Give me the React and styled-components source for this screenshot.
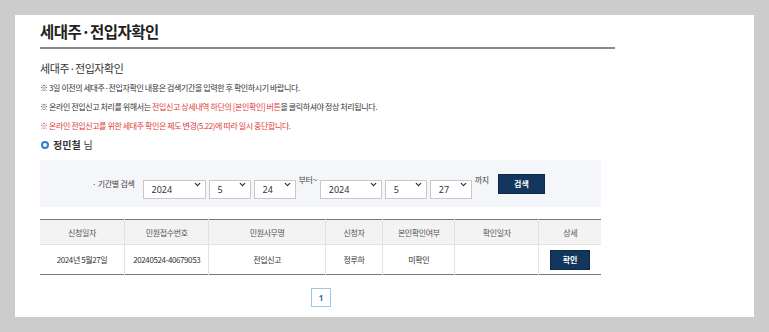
import styled, { createGlobalStyle } from 'styled-components';
import { ChevronDown } from 'lucide-react';

const GlobalStyle = createGlobalStyle`
  html, body {
    margin: 0;
    padding: 0;
    background: #cccccc;
  }
  body {
    font-family: "Noto Sans CJK KR", "Noto Sans", sans-serif;
    color: #333;
  }
`;

const Page = styled.div`
  padding: 15px;
  height: 332px;
  box-sizing: border-box;
`;

const Panel = styled.div`
  background: #fff;
  width: 739px;
  height: 302px;
  box-sizing: border-box;
  padding: 0 0 0 25px;
  overflow: hidden;
`;

const Title = styled.h1`
  margin: 0;
  width: 575px;
  padding-top: 4px;
  height: 28px;
  font-size: 15.5px;
  font-weight: 700;
  color: #222;
  letter-spacing: -0.5px;
  line-height: 24px;
  border-bottom: 2px solid #8a8a8a;
`;

const Content = styled.div`
  width: 561px;
`;

const SubTitle = styled.h2`
  margin: 12px 0 0;
  font-size: 11px;
  font-weight: 400;
  color: #333;
  line-height: 14px;
  height: 14px;
  letter-spacing: -0.4px;
`;

const Notes = styled.ul`
  list-style: none;
  margin: 3px 0 0;
  padding: 0;
`;

const Note = styled.li`
  font-size: 8px;
  height: 19px;
  line-height: 19px;
  letter-spacing: -0.4px;
  white-space: nowrap;
  color: ${p => (p.$red ? '#e03a3a' : '#333')};
`;

const Red = styled.span`
  color: #e03a3a;
`;

const User = styled.div`
  display: flex;
  align-items: center;
  margin-top: 3px;
  height: 14px;
  font-size: 10px;
  line-height: 14px;
  color: #333;
`;

const Ring = styled.span`
  width: 4px;
  height: 4px;
  border: 2px solid #2a7fd4;
  border-radius: 50%;
  margin: 0 4px 0 1px;
`;

const Name = styled.b`
  font-weight: 700;
  margin-right: 3px;
`;

const SearchBox = styled.div`
  margin-top: 8px;
  height: 47px;
  background: #f5f6f9;
  display: flex;
  align-items: center;
  justify-content: center;
  padding-right: 4px;
  gap: 3px;
`;

const SearchLabel = styled.span`
  font-size: 8px;
  color: #444;
  margin-right: 5px;
  letter-spacing: -0.3px;
`;

const Word = styled.span`
  font-size: 8px;
  color: #444;
  align-self: flex-start;
  margin-top: 14px;
  letter-spacing: -0.3px;
`;

const SelectWrap = styled.span`
  position: relative;
  display: inline-block;
  width: ${p => p.$w}px;
  height: 19px;
`;

const Select = styled.select`
  appearance: none;
  width: 100%;
  height: 100%;
  box-sizing: border-box;
  border: 1px solid #c8c8c8;
  background: #fff;
  font-family: "Noto Sans", sans-serif;
  font-size: 9px;
  color: #333;
  padding: 0 0 0 8px;
  border-radius: 0;
  outline: none;
`;

const Arrow = styled(ChevronDown)`
  position: absolute;
  right: 4px;
  top: 6px;
  pointer-events: none;
  color: #333;
`;

const Button = styled.button`
  background: #12365c;
  color: #fff;
  border: 1px solid #0d2a4a;
  font-family: "Noto Sans CJK KR", sans-serif;
  font-size: 8px;
  font-weight: 700;
  width: ${p => p.$w}px;
  height: 20px;
  padding: 0;
  cursor: pointer;
  margin-left: ${p => p.$ml || 0}px;
`;

const Table = styled.table`
  margin-top: 12px;
  width: 561px;
  border-collapse: collapse;
  border-top: 1px solid #777;
  border-bottom: 1px solid #777;
  font-size: 8px;
  letter-spacing: -0.4px;
`;

const Th = styled.th`
  background: #f3f3f3;
  font-weight: 400;
  color: #555;
  height: 24px;
  padding: 0;
  border-left: 1px solid #e2e2e2;
  border-bottom: 1px solid #e2e2e2;
  width: ${p => p.$w}px;
  &:first-child { border-left: 0; }
`;

const Td = styled.td`
  height: 29px;
  padding: 0;
  text-align: center;
  color: #333;
  border-left: 1px solid #e2e2e2;
  &:first-child { border-left: 0; }
`;

const Pager = styled.div`
  display: flex;
  justify-content: center;
  margin-top: 13px;
`;

const PageNum = styled.span`
  width: 18px;
  height: 17px;
  border: 1px solid #9cc8e0;
  display: flex;
  align-items: center;
  justify-content: center;
  font-family: "Noto Sans", sans-serif;
  font-size: 8px;
  font-weight: 700;
  color: #2a6fb0;
  margin-left: 1px;
`;

const cols = [
  ['신청일자', 85],
  ['민원접수번호', 84],
  ['민원사무명', 117],
  ['신청자', 57],
  ['본인확인여부', 72],
  ['확인일자', 84],
  ['상세', 62],
];

function DateSelect({ w, value, options }) {
  return (
    <SelectWrap $w={w}>
      <Select defaultValue={value}>
        {options.map(o => <option key={o}>{o}</option>)}
      </Select>
      <Arrow size={9} strokeWidth={3.2} />
    </SelectWrap>
  );
}

const years = ['2022', '2023', '2024'];
const months = Array.from({ length: 12 }, (_, i) => String(i + 1));
const days = Array.from({ length: 31 }, (_, i) => String(i + 1));

export default function App() {
  return (
    <Page>
      <GlobalStyle />
      <Panel>
        <Title>세대주·전입자확인</Title>
        <Content>
          <SubTitle>세대주·전입자확인</SubTitle>
          <Notes>
            <Note>※ 3일 이전의 세대주·전입자확인 내용은 검색기간을 입력한 후 확인하시기 바랍니다.</Note>
            <Note>※ 온라인 전입신고 처리를 위해서는 <Red>전입신고 상세내역 하단의 [본인확인] 버튼</Red>을 클릭하셔야 정상 처리됩니다.</Note>
            <Note $red>※ 온라인 전입신고를 위한 세대주 확인은 제도 변경(5.22)에 따라 일시 중단합니다.</Note>
          </Notes>
          <User><Ring /><Name>정민철</Name>님</User>
          <SearchBox>
            <SearchLabel>· 기간별 검색</SearchLabel>
            <DateSelect w={63} value="2024" options={years} />
            <DateSelect w={42} value="5" options={months} />
            <DateSelect w={42} value="24" options={days} />
            <Word>부터~</Word>
            <DateSelect w={62} value="2024" options={years} />
            <DateSelect w={42} value="5" options={months} />
            <DateSelect w={42} value="27" options={days} />
            <Word>까지</Word>
            <Button $w={47} $ml={6}>검색</Button>
          </SearchBox>
          <Table>
            <thead>
              <tr>
                {cols.map(([t, w]) => <Th key={t} $w={w}>{t}</Th>)}
              </tr>
            </thead>
            <tbody>
              <tr>
                <Td>2024년 5월27일</Td>
                <Td>20240524-40679053</Td>
                <Td>전입신고</Td>
                <Td>정루하</Td>
                <Td>미확인</Td>
                <Td></Td>
                <Td><Button $w={40}>확인</Button></Td>
              </tr>
            </tbody>
          </Table>
          <Pager><PageNum>1</PageNum></Pager>
        </Content>
      </Panel>
    </Page>
  );
}
